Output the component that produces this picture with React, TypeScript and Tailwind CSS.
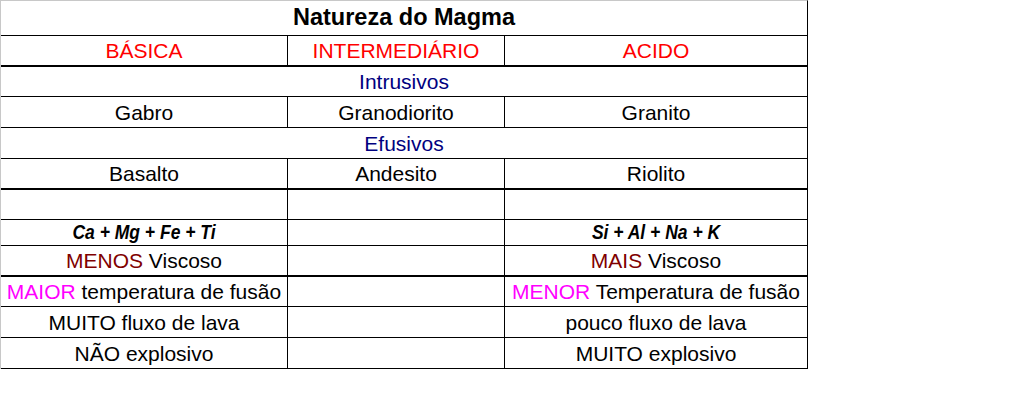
import React from "react";

const font = { fontFamily: '"Liberation Sans", Arial, sans-serif' };

function Row({
  h,
  thick,
  children,
}: {
  h: string;
  thick?: boolean;
  children: React.ReactNode;
}) {
  return (
    <div
      className={`flex ${h} ${thick ? "border-b-2" : "border-b"} border-black`}
    >
      {children}
    </div>
  );
}

function Three({ a, b, c }: { a?: React.ReactNode; b?: React.ReactNode; c?: React.ReactNode }) {
  return (
    <>
      <div className="w-[287px] shrink-0 border-r border-black flex items-center justify-center whitespace-nowrap">
        {a}
      </div>
      <div className="w-[217px] shrink-0 border-r border-black flex items-center justify-center whitespace-nowrap">
        {b}
      </div>
      <div className="flex-1 flex items-center justify-center whitespace-nowrap">{c}</div>
    </>
  );
}

export default function App() {
  return (
    <div className="w-[1015px] h-[416px] bg-white" style={font}>
      <div className="w-[808px] border-t border-l border-t-[#c8c8c8] border-l-[#c8c8c8] border-r border-r-black text-black text-[21px] leading-none">
        <Row h="h-[35px]">
          <div className="flex-1 flex items-center justify-center font-bold text-[23.5px]">
            Natureza do Magma
          </div>
        </Row>
        <Row h="h-[31px]" thick>
          <Three
            a={<span className="text-[#ff0000]">BÁSICA</span>}
            b={<span className="text-[#ff0000]">INTERMEDIÁRIO</span>}
            c={<span className="text-[#ff0000]">ACIDO</span>}
          />
        </Row>
        <Row h="h-[30px]">
          <div className="flex-1 flex items-center justify-center text-[#000080]">Intrusivos</div>
        </Row>
        <Row h="h-[31px]">
          <Three a="Gabro" b="Granodiorito" c="Granito" />
        </Row>
        <Row h="h-[31px]">
          <div className="flex-1 flex items-center justify-center text-[#000080]">Efusivos</div>
        </Row>
        <Row h="h-[31px]" thick>
          <Three a="Basalto" b="Andesito" c="Riolito" />
        </Row>
        <Row h="h-[30px]">
          <Three />
        </Row>
        <Row h="h-[26px]">
          <Three
            a={<span className="inline-block scale-y-[1.15] font-bold italic text-[17.5px]">Ca + Mg + Fe + Ti</span>}
            c={<span className="inline-block scale-y-[1.15] font-bold italic text-[17.5px]">Si + Al + Na + K</span>}
          />
        </Row>
        <Row h="h-[31px]" thick>
          <Three
            a={
              <span>
                <span className="text-[#800000]">MENOS</span> Viscoso
              </span>
            }
            c={
              <span>
                <span className="text-[#800000]">MAIS</span> Viscoso
              </span>
            }
          />
        </Row>
        <Row h="h-[30px]">
          <Three
            a={
              <span>
                <span className="text-[#ff00ff]">MAIOR</span> temperatura de fusão
              </span>
            }
            c={
              <span>
                <span className="text-[#ff00ff]">MENOR</span> Temperatura de fusão
              </span>
            }
          />
        </Row>
        <Row h="h-[31px]">
          <Three a="MUITO fluxo de lava" c="pouco fluxo de lava" />
        </Row>
        <Row h="h-[31px]">
          <Three a="NÃO explosivo" c="MUITO explosivo" />
        </Row>
      </div>
    </div>
  );
}
